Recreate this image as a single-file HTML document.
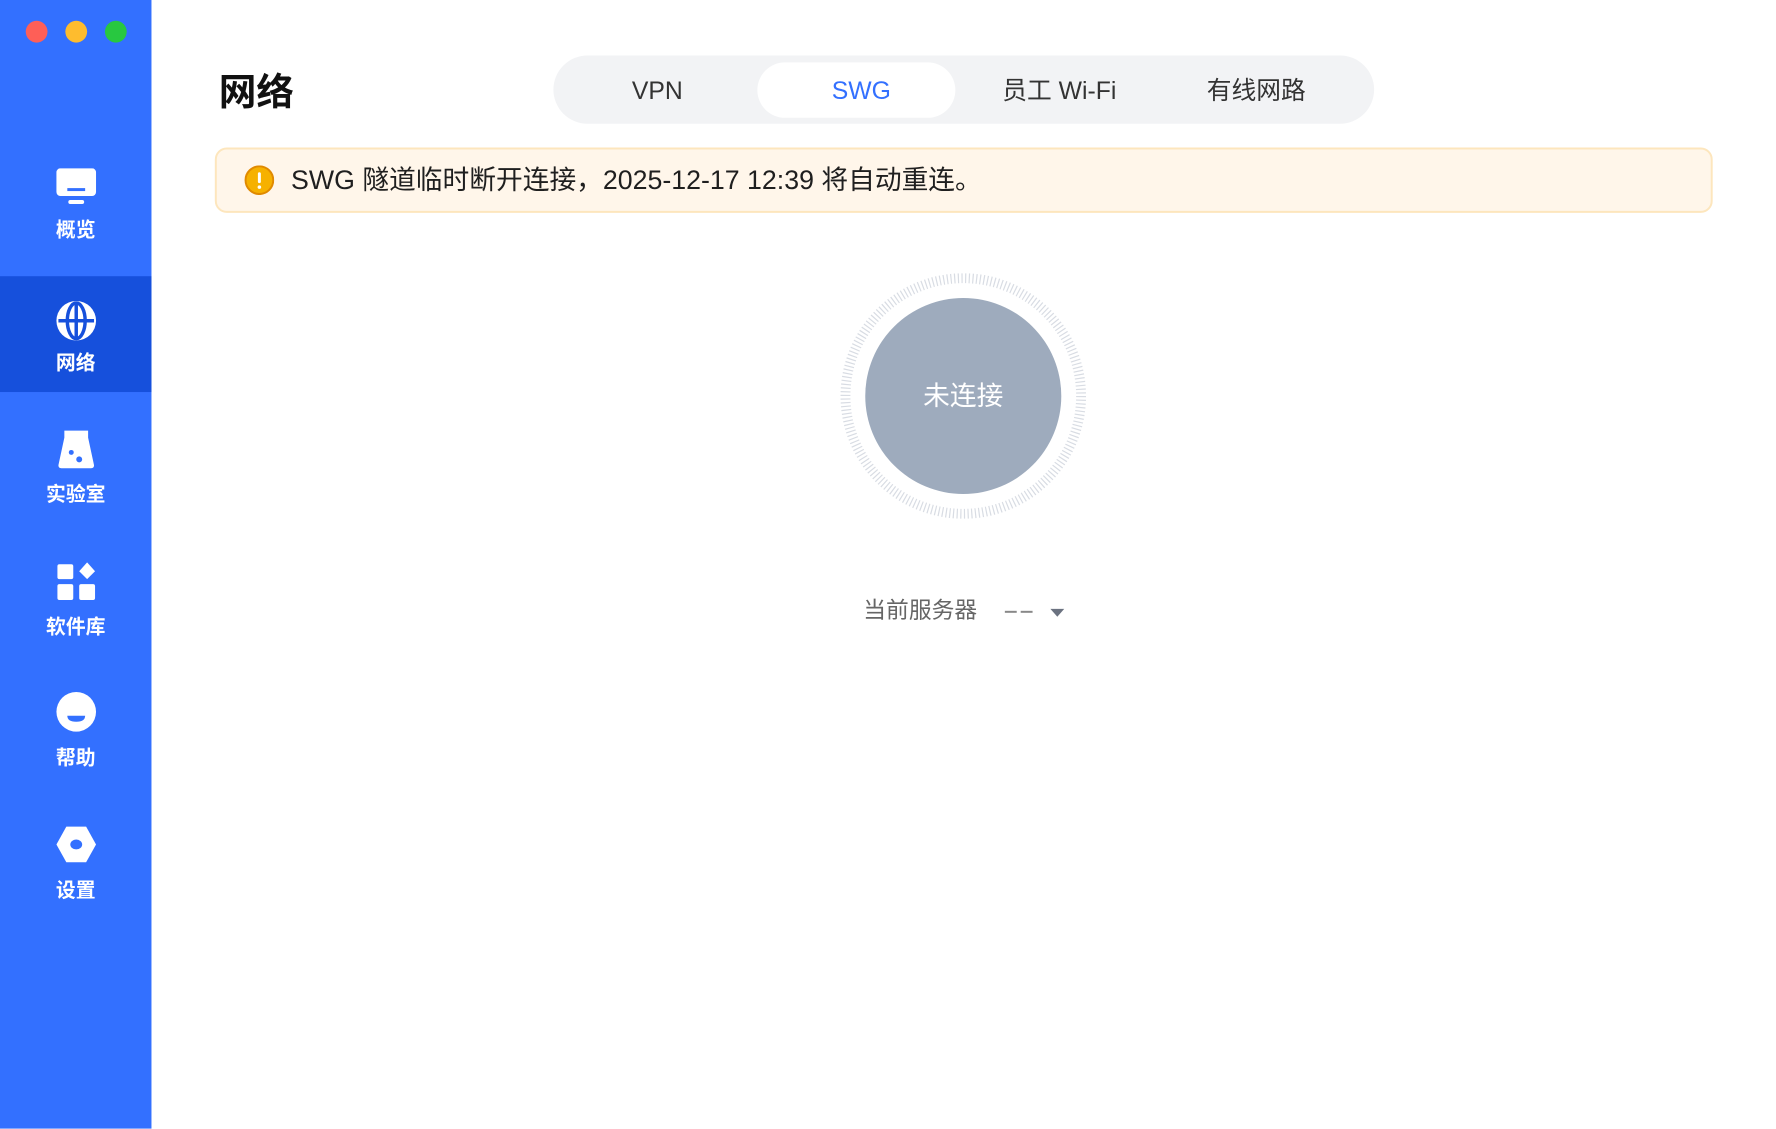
<!DOCTYPE html>
<html><head><meta charset="utf-8"><style>
*{margin:0;padding:0;box-sizing:border-box}
body{width:1776px;height:1120px;background:#fff;position:relative;overflow:hidden;font-family:"Liberation Sans","Noto Sans CJK SC",sans-serif;}
#w{position:absolute;left:0;top:0;width:1800px;height:1140px;transform:scale(0.99);transform-origin:0 0}
.sb{position:absolute;left:0;top:0;width:153px;height:1140px;background:#3370ff}
.dot{position:absolute;top:21px;width:22px;height:22px;border-radius:50%}
.act{position:absolute;left:0;top:279px;width:153px;height:117px;background:#1650dc}
.it{position:absolute;left:0;width:153px;text-align:center;color:#fff;font-size:20px;font-weight:bold}
.ic{position:absolute;left:56px}
.title{position:absolute;left:221px;top:62px;font-size:38px;font-weight:bold;color:#111}
.tabs{position:absolute;left:559px;top:56px;width:829px;height:69px;border-radius:35px;background:#f2f3f5}
.pill{position:absolute;left:206px;top:7px;width:200px;height:56px;border-radius:28px;background:#fff}
.tab{position:absolute;top:2px;line-height:69px;font-size:25px;color:#333;transform:translateX(-50%);white-space:nowrap}
.ban{position:absolute;left:217px;top:149px;width:1513px;height:66px;border-radius:12px;background:#fff6ea;border:2px solid #fde6bd}
.ban .t{position:absolute;left:75px;top:0;line-height:62px;font-size:27px;color:#1f1f1f;white-space:nowrap}
.srv{position:absolute;left:872px;top:597px;font-size:23px;color:#666;white-space:nowrap}
.dash{display:inline-block;width:12px;height:2px;background:#888;vertical-align:middle;margin-right:4px}
</style></head><body><div id="w">
<div class="sb">
<div class="dot" style="left:26px;background:#fe5f57"></div>
<div class="dot" style="left:66px;background:#febc2e"></div>
<div class="dot" style="left:106px;background:#28c840"></div>
<div class="act"></div>
<svg class="ic" style="top:170px" width="42" height="38" viewBox="0 0 42 38"><rect x="1" y="0" width="40" height="28" rx="4" fill="#fff"/><rect x="12" y="20" width="18" height="3" fill="#3370ff"/><rect x="13" y="32" width="16" height="4" rx="2" fill="#fff"/></svg>
<div class="it" style="top:216px">概览</div>
<svg class="ic" style="top:303px" width="42" height="42" viewBox="0 0 42 42"><circle cx="21" cy="21" r="20" fill="#fff"/><path d="M3 21H39M21 2V40" stroke="#1650dc" stroke-width="3.5"/><ellipse cx="21" cy="21" rx="9" ry="18" fill="none" stroke="#1650dc" stroke-width="3.5"/></svg>
<div class="it" style="top:350px">网络</div>
<svg class="ic" style="top:434px" width="42" height="40" viewBox="0 0 42 40"><path d="M9 1H33V8L39 36Q39 39 36 39H6Q3 39 3 36L9 8Z" fill="#fff"/><circle cx="16" cy="23" r="2.5" fill="#3370ff"/><circle cx="24" cy="30" r="3" fill="#3370ff"/></svg>
<div class="it" style="top:483px">实验室</div>
<svg class="ic" style="top:568px" width="42" height="40" viewBox="0 0 42 40"><rect x="2" y="2" width="16" height="15" rx="2" fill="#fff"/><rect x="2" y="22" width="16" height="16" rx="2" fill="#fff"/><rect x="24" y="22" width="16" height="16" rx="2" fill="#fff"/><path d="M32 0L40 9L32 17L24 9Z" fill="#fff"/></svg>
<div class="it" style="top:617px">软件库</div>
<svg class="ic" style="top:698px" width="42" height="42" viewBox="0 0 42 42"><circle cx="21" cy="21" r="20" fill="#fff"/><path d="M12 25H30Q30 31 21 31Q12 31 12 25Z" fill="#3370ff"/></svg>
<div class="it" style="top:749px">帮助</div>
<svg class="ic" style="top:834px" width="42" height="38" viewBox="0 0 42 38"><path d="M11 1H31L41 19L31 37H11L1 19Z" fill="#fff"/><ellipse cx="21" cy="19" rx="6" ry="5" fill="#3370ff"/></svg>
<div class="it" style="top:883px">设置</div>
</div>
<div class="title">网络</div>
<div class="tabs"><div class="pill"></div>
<div class="tab" style="left:105px">VPN</div>
<div class="tab" style="left:311px;color:#3370ff">SWG</div>
<div class="tab" style="left:511px">员工 Wi-Fi</div>
<div class="tab" style="left:710px">有线网路</div>
</div>
<div class="ban">
<svg style="position:absolute;left:28px;top:16px" width="30" height="30" viewBox="0 0 30 30"><circle cx="15" cy="15" r="14" fill="#f6b100" stroke="#e08a00" stroke-width="2"/><rect x="13.5" y="7" width="3" height="11" rx="1.5" fill="#fff"/><circle cx="15" cy="22" r="1.8" fill="#fff"/></svg>
<div class="t">SWG 隧道临时断开连接，2025-12-17 12:39 将自动重连。</div>
</div>
<svg style="position:absolute;left:849px;top:276px" width="248" height="248" viewBox="0 0 248 248">
<circle cx="124" cy="124" r="119" fill="none" stroke="#d8dce3" stroke-width="10" stroke-dasharray="1.2 2.5"/>
<circle cx="124" cy="124" r="99" fill="#9eabbd"/>
<text x="124" y="133" text-anchor="middle" font-size="27" fill="#fff" font-family="Liberation Sans,Noto Sans CJK SC,sans-serif">未连接</text>
</svg>
<div class="srv">当前服务器 <span style="margin-left:22px"></span><span class="dash"></span><span class="dash"></span>
<svg width="16" height="10" viewBox="0 0 16 10" style="margin-left:6px"><path d="M1 1H15L8 9Z" fill="#6b7280"/></svg></div>
</div></body></html>
